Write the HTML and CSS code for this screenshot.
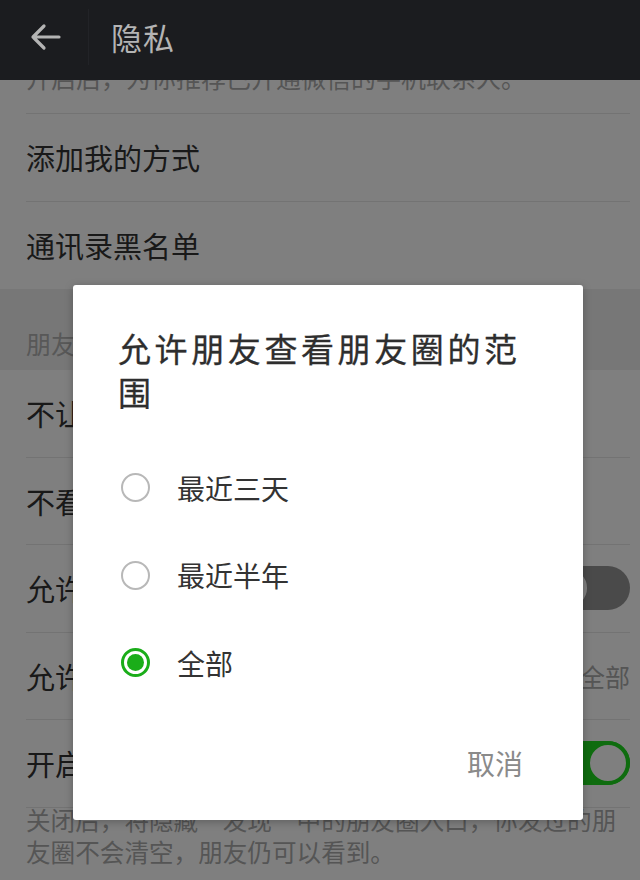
FILE: index.html
```html
<!DOCTYPE html>
<html lang="zh-CN">
<head>
<meta charset="utf-8">
<title>隐私</title>
<link rel="stylesheet" href="styles.css">
</head>
<body>
<div class="screen">
  <header class="appbar">
    <span class="back">
      <svg width="32" height="28" viewBox="0 0 32 28"><path d="M30 14H4M15 3L4 14l11 11" fill="none" stroke="#b4b4b4" stroke-width="3.2" stroke-linecap="round" stroke-linejoin="round"/></svg>
    </span>
    <span class="divider"></span>
    <h1 class="title">隐私</h1>
  </header>

  <main class="content">
    <p class="note note-top">开启后，为你推荐已开通微信的手机联系人。</p>
    <div class="group">
      <div class="row"><span class="label">添加我的方式</span></div>
      <div class="row"><span class="label">通讯录黑名单</span></div>
    </div>
    <div class="section"><span class="section-label">朋友圈</span></div>
    <div class="group">
      <div class="row"><span class="label">不让他（她）看我的朋友圈</span></div>
      <div class="row"><span class="label">不看他（她）的朋友圈</span></div>
      <div class="row"><span class="label">允许陌生人查看十条朋友圈</span><span class="switch"><span class="knob"></span></span></div>
      <div class="row"><span class="label">允许朋友查看朋友圈的范围</span><span class="value">全部</span></div>
      <div class="row"><span class="label">开启朋友圈入口</span><span class="switch on"><span class="knob"></span></span></div>
    </div>
    <p class="note note-bottom">关闭后，将隐藏“发现”中的朋友圈入口，你发过的朋友圈不会清空，朋友仍可以看到。</p>
  </main>

  <div class="scrim"></div>

  <div class="dialog" role="dialog">
    <h2 class="dialog-title">允许朋友查看朋友圈的范围</h2>
    <ul class="options">
      <li class="option"><span class="radio"></span><span class="option-text">最近三天</span></li>
      <li class="option"><span class="radio"></span><span class="option-text">最近半年</span></li>
      <li class="option"><span class="radio checked"></span><span class="option-text">全部</span></li>
    </ul>
    <div class="actions"><span class="btn">取消</span></div>
  </div>
</div>
</body>
</html>
```

FILE: styles.css
```css
* { box-sizing: border-box; }
html, body { margin: 0; padding: 0; }
body {
  font-family: "Noto Sans CJK SC", "Noto Sans", sans-serif;
  background: #808080;
}
.screen {
  position: relative;
  width: 640px;
  height: 880px;
  overflow: hidden;
  background: #ffffff;
}

/* app bar */
.appbar {
  position: relative;
  z-index: 2;
  height: 80px;
  padding-bottom: 6px;
  background: #1b1c1f;
  display: flex;
  align-items: center;
}
.back {
  width: 88px;
  padding-left: 29px;
  display: flex;
  align-items: center;
}
.back svg { display: block; }
.divider {
  width: 1px;
  height: 56px;
  background: #222327;
}
.title {
  margin: 0 0 0 22px;
  font-size: 31px;
  font-weight: 400;
  color: #b4b4b4;
  letter-spacing: 1px;
  line-height: 40px;
}

/* list */
.content {
  margin-top: -19px;
  background: #ffffff;
}
.note {
  margin: 0;
  font-size: 25px;
  line-height: 32px;
  color: #ababab;
}
.note-top {
  margin: 0 10px 0 26px;
  padding-bottom: 20px;
  border-bottom: 1px solid #e6e6e6;
}
.note-bottom {
  margin-top: -5px;
  padding: 0 8px 0 26px;
  font-size: 24.6px;
  line-height: 32px;
}
.group { background: #ffffff; }
.row {
  height: 87.5px;
  margin: 0 10px 0 26px;
  border-bottom: 1px solid #e6e6e6;
  display: flex;
  align-items: center;
  justify-content: space-between;
}
.group:first-of-type .row:last-child { border-bottom: none; }
.label {
  font-size: 29px;
  color: #333333;
  white-space: nowrap;
}
.value {
  font-size: 25px;
  color: #aaaaaa;
}
.section {
  height: 81px;
  background: #eeeeee;
  padding: 38px 0 0 26px;
}
.section-label {
  font-size: 25px;
  line-height: 32px;
  color: #b0b0b0;
}

/* switches */
.switch {
  position: relative;
  flex: none;
  width: 84px;
  height: 44px;
  border-radius: 22px;
  background: #959595;
}
.switch .knob {
  position: absolute;
  left: 0;
  top: 0;
  width: 44px;
  height: 44px;
  border-radius: 50%;
  background: #ffffff;
  border: 3px solid #959595;
}
.switch.on { background: #1ed81e; }
.switch.on .knob { left: auto; right: 0; border: 4px solid #1ed81e; }

/* scrim */
.scrim {
  position: absolute;
  left: 0;
  right: 0;
  top: 80px;
  bottom: 0;
  z-index: 1;
  background: rgba(0, 0, 0, 0.5);
}

/* dialog */
.dialog {
  position: absolute;
  z-index: 3;
  left: 73px;
  top: 285px;
  width: 510px;
  height: 535px;
  background: #ffffff;
  border-radius: 3px;
  padding: 41px 45px 0 45px;
  box-shadow: 0 2px 8px rgba(0,0,0,0.25);
}
.dialog-title {
  margin: 0;
  font-size: 33px;
  font-weight: 400;
  line-height: 44px;
  letter-spacing: 3.6px;
  color: #2e2e2e;
  -webkit-text-stroke: 0.3px #2e2e2e;
}
.options {
  list-style: none;
  margin: 30px 0 0 0;
  padding: 0;
}
.option {
  height: 87.5px;
  display: flex;
  align-items: center;
}
.radio {
  flex: none;
  width: 29px;
  height: 29px;
  margin-left: 3px;
  border-radius: 50%;
  border: 2px solid #b8b8b8;
  position: relative;
}
.radio.checked { border: 3px solid #1aad19; }
.radio.checked::after {
  content: "";
  position: absolute;
  left: 3px;
  top: 3px;
  width: 17px;
  height: 17px;
  border-radius: 50%;
  background: #1aad19;
}
.option-text {
  margin-left: 27px;
  font-size: 28px;
  color: #333333;
}
.actions {
  margin-top: 36px;
  display: flex;
  justify-content: flex-end;
  padding-right: 15px;
}
.btn {
  font-size: 28px;
  line-height: 40px;
  color: #8a8a8a;
}
```
